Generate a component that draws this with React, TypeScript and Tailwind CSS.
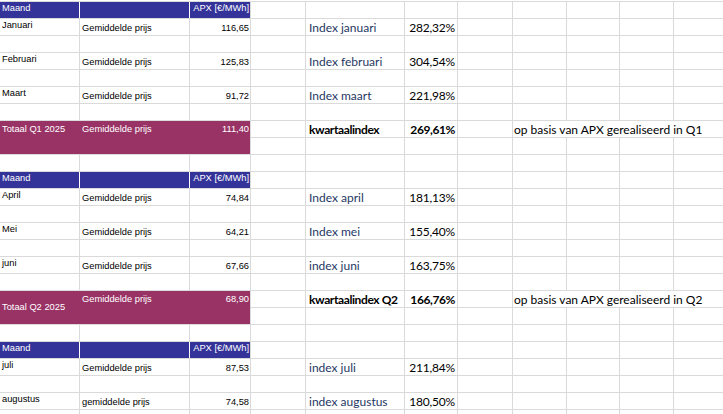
import React from 'react';

type Row =
  | { kind: 'head' }
  | { kind: 'empty' }
  | { kind: 'month'; maand: string; label: string; apx: string; index: string; pct: string }
  | { kind: 'total'; title: string; label: string; apx: string; index: string; pct: string; note: string; mid?: boolean }
  | { kind: 'totalRest' };

const rows: Row[] = [
  { kind: 'head' },
  { kind: 'month', maand: 'Januari', label: 'Gemiddelde prijs', apx: '116,65', index: 'Index januari', pct: '282,32%' },
  { kind: 'empty' },
  { kind: 'month', maand: 'Februari', label: 'Gemiddelde prijs', apx: '125,83', index: 'Index februari', pct: '304,54%' },
  { kind: 'empty' },
  { kind: 'month', maand: 'Maart', label: 'Gemiddelde prijs', apx: '91,72', index: 'Index maart', pct: '221,98%' },
  { kind: 'empty' },
  { kind: 'total', title: 'Totaal Q1 2025', label: 'Gemiddelde prijs', apx: '111,40', index: 'kwartaalindex', pct: '269,61%', note: 'op basis van APX gerealiseerd in Q1' },
  { kind: 'totalRest' },
  { kind: 'empty' },
  { kind: 'head' },
  { kind: 'month', maand: 'April', label: 'Gemiddelde prijs', apx: '74,84', index: 'Index april', pct: '181,13%' },
  { kind: 'empty' },
  { kind: 'month', maand: 'Mei', label: 'Gemiddelde prijs', apx: '64,21', index: 'Index mei', pct: '155,40%' },
  { kind: 'empty' },
  { kind: 'month', maand: 'juni', label: 'Gemiddelde prijs', apx: '67,66', index: 'index juni', pct: '163,75%' },
  { kind: 'empty' },
  { kind: 'total', title: 'Totaal Q2 2025', label: 'Gemiddelde prijs', apx: '68,90', index: 'kwartaalindex Q2', pct: '166,76%', note: 'op basis van APX gerealiseerd in Q2', mid: true },
  { kind: 'totalRest' },
  { kind: 'empty' },
  { kind: 'head' },
  { kind: 'month', maand: 'juli', label: 'Gemiddelde prijs', apx: '87,53', index: 'index juli', pct: '211,84%' },
  { kind: 'empty' },
  { kind: 'month', maand: 'augustus', label: 'gemiddelde prijs', apx: '74,58', index: 'index augustus', pct: '180,50%' },
  { kind: 'empty' },
];

const sans = "font-['Liberation_Sans',Arial,sans-serif] text-[9.3px] leading-[11px]";
const calibri = "font-['Lato','Open_Sans',sans-serif] text-[12px] leading-[15px] whitespace-nowrap";

const Blank = () => <div className="bg-white" />;

const blanks = (n: number, key: string) =>
  Array.from({ length: n }, (_, i) => <Blank key={`${key}-${i}`} />);

const Header = () => (
  <div className={`col-span-3 flex bg-[#333399] text-white ${sans}`}>
    <div className="w-[79px] pl-[2px] pt-px">Maand</div>
    <div className="w-px bg-white" />
    <div className="w-[109px]" />
    <div className="w-px bg-white" />
    <div className="flex-1 pr-[1px] pt-px text-right">APX [€/MWh]</div>
  </div>
);

const renderRow = (row: Row, r: number) => {
  const k = `r${r}`;
  switch (row.kind) {
    case 'head':
      return [<Header key={k} />, ...blanks(8, k)];
    case 'empty':
      return blanks(11, k);
    case 'totalRest':
      return blanks(8, k);
    case 'month':
      return [
        <div key={`${k}-a`} className={`bg-white pl-[2px] pt-px text-black ${sans}`}>{row.maand}</div>,
        <div key={`${k}-b`} className={`flex items-end bg-white pb-px pl-[2px] text-black ${sans}`}>{row.label}</div>,
        <div key={`${k}-c`} className={`flex items-end justify-end bg-white pb-px pr-[1px] text-black ${sans}`}>{row.apx}</div>,
        <Blank key={`${k}-d`} />,
        <div key={`${k}-e`} className={`flex items-end bg-white pl-[3px] text-[#1f3864] ${calibri}`}>{row.index}</div>,
        <div key={`${k}-f`} className={`flex items-end justify-end bg-white pr-[2px] tracking-[-0.2px] text-black ${calibri}`}>{row.pct}</div>,
        ...blanks(5, k),
      ];
    case 'total':
      return [
        <div key={`${k}-p`} className={`col-span-3 row-span-2 flex bg-[#993366] text-white ${sans}`}>
          <div className={`flex w-[80px] pl-[2px] ${row.mid ? 'items-center' : 'items-start pt-[3px]'}`}>{row.title}</div>
          <div className="w-[110px] pl-[2px] pt-[3px]">{row.label}</div>
          <div className="flex-1 pr-[1px] pt-[3px] text-right">{row.apx}</div>
        </div>,
        <Blank key={`${k}-d`} />,
        <div key={`${k}-e`} className={`flex items-end bg-white pl-[3px] font-bold tracking-[-0.4px] text-black ${calibri}`}>{row.index}</div>,
        <div key={`${k}-f`} className={`flex items-end justify-end bg-white pr-[2px] font-bold tracking-[-0.4px] text-black ${calibri}`}>{row.pct}</div>,
        <Blank key={`${k}-g`} />,
        <div key={`${k}-h`} className={`col-span-4 flex items-end bg-white pl-[1px] text-black ${calibri}`}>{row.note}</div>,
      ];
  }
};

export default function App() {
  return (
    <div className="h-[414px] w-[723px] overflow-hidden bg-white">
      <div className="mt-px grid w-[727px] grid-cols-[79px_109px_60px_54px_98px_52px_54px_53px_52px_53px_53px] grid-rows-[repeat(25,16px)] gap-px border-t border-[#dadada] bg-[#dadada]">
        {rows.flatMap((row, r) => renderRow(row, r))}
      </div>
    </div>
  );
}
